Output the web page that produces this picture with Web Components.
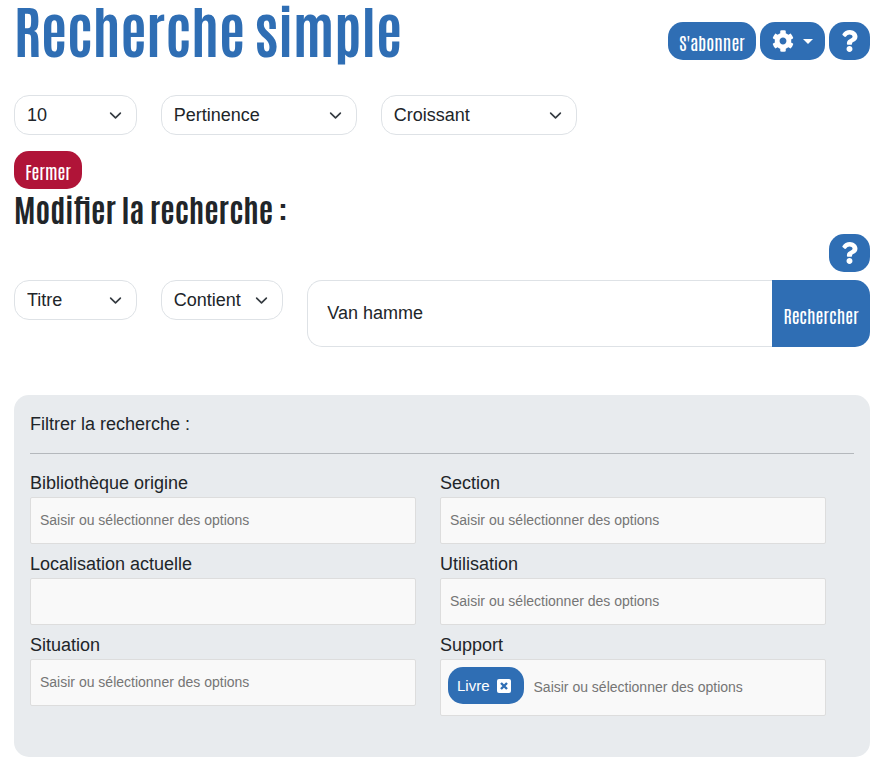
<!DOCTYPE html>
<html lang="fr">
<head>
<meta charset="utf-8">
<meta name="viewport" content="width=device-width, initial-scale=1">
<title>Recherche simple</title>
<style>
  body {
    margin: 0;
    background: #fff;
    color: #212529;
    font: 18px/27px "Liberation Sans", Arial, sans-serif;
    --blue: #2f6eb4;
    --red: #b01438;
    --line: #dee2e6;
    --display: Antonio, "Roboto Condensed", "Open Sans Condensed", "Liberation Sans", sans-serif;
  }
</style>
</head>
<body>
<search-page></search-page>

<script>
const icons = {
  gear: '<svg width="22" height="22" viewBox="0 0 512 512" fill="currentColor" aria-hidden="true"><path d="M487.4 315.7l-42.6-24.6c4.300-23.200 4.300-47 0-70.200l42.600-24.600c4.900-2.800 7.100-8.600 5.500-14-11.100-35.600-30-67.800-54.700-94.600-3.800-4.100-10-5.100-14.800-2.300L380.800 110c-17.900-15.400-38.500-27.300-60.800-35.100V25.800c0-5.600-3.900-10.500-9.400-11.700-36.700-8.200-74.300-7.800-109.200 0-5.500 1.200-9.400 6.100-9.400 11.700V75c-22.200 7.900-42.800 19.800-60.800 35.100L88.700 85.500c-4.900-2.800-11-1.900-14.800 2.300-24.700 26.700-43.600 58.900-54.700 94.600-1.700 5.400.600 11.200 5.500 14L67.300 221c-4.300 23.200-4.300 47 0 70.200l-42.600 24.600c-4.900 2.800-7.100 8.600-5.500 14 11.100 35.600 30 67.800 54.700 94.600 3.800 4.100 10 5.100 14.800 2.300l42.600-24.600c17.900 15.400 38.500 27.300 60.800 35.100v49.200c0 5.600 3.900 10.500 9.400 11.700 36.700 8.200 74.300 7.800 109.200 0 5.500-1.200 9.400-6.100 9.400-11.700v-49.200c22.200-7.900 42.800-19.800 60.800-35.100l42.600 24.600c4.900 2.800 11 1.900 14.800-2.300 24.700-26.700 43.600-58.900 54.700-94.600 1.500-5.500-.700-11.300-5.600-14.100zM256 336c-44.100 0-80-35.900-80-80s35.900-80 80-80 80 35.900 80 80-35.900 80-80 80z"/></svg>',
  help: '<svg width="17" height="22" viewBox="0 0 384 512" fill="currentColor" aria-hidden="true"><path d="M202.021 0C122.202 0 70.503 32.703 29.914 91.026c-7.363 10.580-5.093 25.086 5.178 32.874l43.138 32.709c10.373 7.865 25.132 6.026 33.253-4.148 25.049-31.381 43.630-49.449 82.757-49.449 30.764 0 68.816 19.799 68.816 49.631 0 22.552-18.617 34.134-48.993 51.164-35.423 19.860-82.299 44.576-82.299 106.405V320c0 13.255 10.745 24 24 24h72.471c13.255 0 24-10.745 24-24v-5.773c0-42.860 125.268-44.645 125.268-160.627C377.504 66.256 286.902 0 202.021 0zM192 373.459c-38.196 0-69.271 31.075-69.271 69.271 0 38.195 31.075 69.270 69.271 69.270s69.271-31.075 69.271-69.271-31.075-69.270-69.271-69.270z"/></svg>',
  chevron: '<svg class="chevron" width="13" height="13" viewBox="0 0 16 16" fill="none" stroke="#343a40" stroke-linecap="round" stroke-linejoin="round" stroke-width="2" aria-hidden="true"><path d="m2 5 6 6 6-6"/></svg>',
  remove: '<svg width="14" height="14" viewBox="0 0 14 14" aria-hidden="true"><rect width="14" height="14" rx="2" fill="#fff"/><path d="M4 4l6 6M10 4l-6 6" stroke="#2f6eb4" stroke-width="2.400"/></svg>'
};
const reset = '*{box-sizing:border-box} button,input,select{font:inherit;color:inherit;margin:0}';

class PillButton extends HTMLElement {
  constructor() {
    super();
    this.attachShadow({mode: 'open'}).innerHTML = `<style>${reset}
      :host { display: block; }
      button { display: flex; align-items: center; justify-content: center; gap: 9px; width: 100%; height: 100%;
        min-height: 38px; padding: 2px 10px 0; border: 0; border-radius: 15px; background: var(--blue); color: #fff;
        font: 18px/24px var(--display); cursor: pointer; white-space: nowrap; }
      button[aria-label] { padding-top: 0; }
      :host([tone="danger"]) button { background: var(--red); }
      :host([joined]) button { border-radius: 0 15px 15px 0; }
      .caret { border: 5px solid transparent; border-top-color: #fff; border-bottom: 0; }
      svg { display: block; }
    </style><button type="button"><slot></slot></button>`;
    const button = this.shadowRoot.querySelector('button');
    const icon = this.getAttribute('icon');
    if (icon) {
      button.innerHTML = icons[icon] + (icon === 'gear' ? '<span class="caret"></span>' : '');
      button.setAttribute('aria-label', icon === 'gear' ? 'Options' : 'Aide');
    }
  }
}
customElements.define('pill-button', PillButton);

class SelectBox extends HTMLElement {
  constructor() {
    super();
    this.attachShadow({mode: 'open'}).innerHTML = `<style>${reset}
      :host { display: grid; align-items: center; align-self: start; }
      select, .chevron { grid-area: 1 / 1; }
      select { appearance: none; width: 100%; height: 40px; padding: 0 32px 0 12px; border: 1px solid var(--line);
        border-radius: 15px; background: #fff; }
      .chevron { justify-self: end; margin-right: 15px; pointer-events: none; }
    </style><select aria-label="${this.getAttribute('label')}"><option>${this.getAttribute('value')}</option></select>${icons.chevron}`;
  }
}
customElements.define('select-box', SelectBox);

class SearchField extends HTMLElement {
  constructor() {
    super();
    this.attachShadow({mode: 'open'}).innerHTML = `<style>${reset}
      :host { display: flex; height: 67px; }
      input { flex: 1; min-width: 0; padding: 0 19px; border: 1px solid var(--line); border-right: 0;
        border-radius: 15px 0 0 15px; background: #fff; }
      pill-button { flex: 0 0 98px; }
    </style><input type="text" aria-label="Recherche" value="Van hamme"><pill-button joined>Rechercher</pill-button>`;
  }
}
customElements.define('search-field', SearchField);

class TagField extends HTMLElement {
  constructor() {
    super();
    const tag = this.getAttribute('tag');
    this.attachShadow({mode: 'open'}).innerHTML = `<style>${reset}
      :host { display: block; }
      label { display: block; }
      .box { display: flex; align-items: center; min-height: 47px; padding: 0 9px; border: 1px solid #ddd;
        border-radius: 2px; background: #f9f9f9; }
      .box.tagged { min-height: 57px; padding: 0 7px; gap: 10px; }
      input { flex: 1; min-width: 0; height: 27px; padding: 0; border: 0; background: none; font-size: 14px; }
      input::placeholder { color: #757575; opacity: 1; }
      button { display: flex; align-items: center; gap: 7px; height: 37px; margin-bottom: 4px; padding: 0 13px 0 9px; border: 0;
        border-radius: 15px; background: var(--blue); color: #fff; font-size: 15px; }
    </style><label for="field">${this.getAttribute('label')}</label>
    <div class="box${tag ? ' tagged' : ''}">${tag ? `<button type="button">${tag}${icons.remove}</button>` : ''}<input id="field" type="text" placeholder="${this.getAttribute('hint') ?? 'Saisir ou sélectionner des options'}"></div>`;
  }
}
customElements.define('tag-field', TagField);

class FilterPanel extends HTMLElement {
  constructor() {
    super();
    this.attachShadow({mode: 'open'}).innerHTML = `<style>${reset}
      :host { display: block; padding: 16px 16px 41px; border-radius: 15px; background: #e8ebee; }
      p { margin: 0; }
      hr { height: 1px; margin: 15px 0 16px; border: 0; background: #b4b8bc; }
      .fields { display: grid; grid-template-columns: 1fr 1fr; gap: 7px 24px; padding-right: 28px; }
    </style><p>Filtrer la recherche :</p><hr><div class="fields"><slot></slot></div>`;
  }
}
customElements.define('filter-panel', FilterPanel);

class SearchPage extends HTMLElement {
  constructor() {
    super();
    this.attachShadow({mode: 'open'}).innerHTML = `<style>${reset}
      :host { display: block; padding: 0 12px 8px 14px; }
      header { display: flex; justify-content: space-between; align-items: flex-start; height: 95px; }
      h1, h2 { margin: 0; font-family: var(--display); font-weight: bold; }
      h1 { color: var(--blue); font-size: 56px; line-height: 58px; }
      h2 { font-size: 31px; line-height: 38px; margin-bottom: 7px; }
      .actions { display: flex; gap: 4px; padding-top: 22px; }
      .subscribe { width: 88px; }
      .gear { width: 65px; }
      .help { width: 41px; }
      .close { width: 68px; }
      .row { display: grid; grid-template-columns: repeat(12, 1fr); column-gap: 24px; }
      .two { grid-column: span 2; }
      .three { grid-column: span 3; }
      .eight { grid-column: span 8; }
      .sort { margin-bottom: 16px; }
      .right { display: flex; justify-content: flex-end; margin-bottom: 8px; }
      filter-panel { margin-top: 48px; }
    </style>
    <header>
      <h1>Recherche simple</h1>
      <div class="actions">
        <pill-button class="subscribe">S'abonner</pill-button>
        <pill-button class="gear" icon="gear"></pill-button>
        <pill-button class="help" icon="help"></pill-button>
      </div>
    </header>
    <div class="row sort">
      <select-box class="two" label="Résultats par page" value="10"></select-box>
      <select-box class="three" label="Tri" value="Pertinence"></select-box>
      <select-box class="three" label="Ordre" value="Croissant"></select-box>
    </div>
    <pill-button class="close" tone="danger">Fermer</pill-button>
    <h2>Modifier la recherche :</h2>
    <div class="right"><pill-button class="help" icon="help"></pill-button></div>
    <div class="row">
      <select-box class="two" label="Champ" value="Titre"></select-box>
      <select-box class="two" label="Opérateur" value="Contient"></select-box>
      <search-field class="eight"></search-field>
    </div>
    <filter-panel>
      <tag-field label="Bibliothèque origine"></tag-field>
      <tag-field label="Section"></tag-field>
      <tag-field label="Localisation actuelle" hint=""></tag-field>
      <tag-field label="Utilisation"></tag-field>
      <tag-field label="Situation"></tag-field>
      <tag-field label="Support" tag="Livre"></tag-field>
    </filter-panel>`;
  }
}
customElements.define('search-page', SearchPage);
</script>
</body>
</html>
